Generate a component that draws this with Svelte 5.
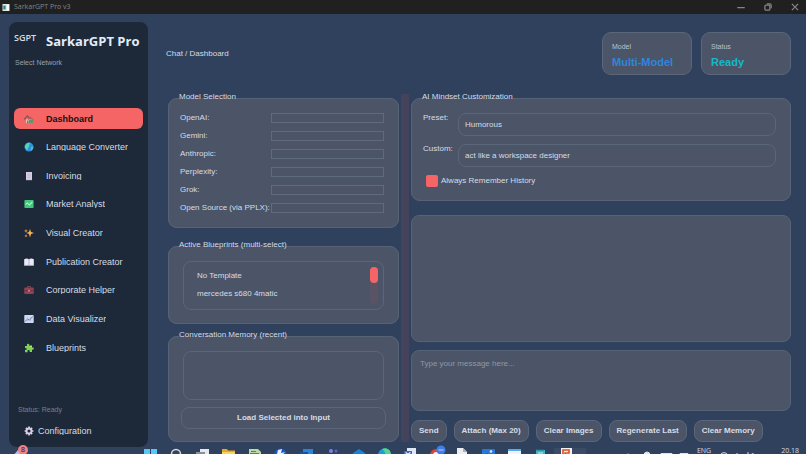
<script>
  const icons = {
    house: '<path d="M0 5.6 3.4 2 6.6 5.4" fill="none" stroke="#7d5a5c" stroke-width="1.3"/><path d="M2 5.4h4.4V9H2z" fill="#e8c6a8"/><path d="M5 6h4v3H5z" fill="#6d8f6a"/><path d="M4.4 5.6 6.8 3.4 9.6 6" fill="none" stroke="#b0603f" stroke-width="1"/><path d="M3 6.4h1.6V9H3z" fill="#5b7fa6"/>',
    globe: '<circle cx="5" cy="5" r="4.5" fill="#2f8fe0"/><path d="M.8 4C1.600 1.600 4 .3 6 .7 5.800 2.400 5 3 5 4.400 4.600 5.600 3.800 6 3.600 8 2 7.600.7 6 .8 4z" fill="#4fd6b4"/><path d="M7 5l2.300-.6c.2 1.800-.8 3.400-2.300 4.200-.6-1.200.2-2.400 0-3.600z" fill="#46c3c6"/>',
    receipt: '<path d="M2 1h6v8.400l-1-.6-1 .6-1-.6-1 .6-1-.6-1 .6z" fill="#d6d0e2"/><path d="M3.200 3h3.600M3.200 4.800h3.600M3.200 6.600h3.600" stroke="#b5aec8" stroke-width=".6"/>',
    market: '<rect x=".4" y="1" width="9.200" height="8" rx=".8" fill="#3fc97c"/><path d="M1.600 5.400 3.400 4l1.800 2L8.400 3" fill="none" stroke="#b8f5cf" stroke-width="1.100"/>',
    sparkles: '<path d="M6 1 7 4l3 1-3 1-1 3.400L5 6 2.400 5 5 4z" fill="#f9b84a"/><path d="M2 1l.5 1.300L4 3l-1.500.5L2 5l-.5-1.500L0 3l1.500-.7zM2 6l.4 1.200L3.600 8l-1.200.4L2 9.600l-.4-1.200L.4 8l1.200-.8z" fill="#f58b4c"/>',
    book: '<path d="M.2 2.200C2 1.400 4 1.400 5 2.400c1-1 3-1 4.800-.2v6.200H.2z" fill="#eceaf8"/><path d="M5 2.400v6" stroke="#8f93b5" stroke-width=".6"/><path d="M0 8.400h10" stroke="#8fb4e0" stroke-width=".7"/>',
    briefcase: '<path d="M3.400 2.800V1.600h3.200v1.200" fill="none" stroke="#8a4a58" stroke-width=".9"/><rect x=".2" y="2.600" width="9.600" height="6.400" rx="1" fill="#8e4253"/><path d="M.2 5.600h9.600" stroke="#5f2c3c" stroke-width=".6"/><rect x="4.200" y="4.800" width="1.600" height="1.800" fill="#d68f8f"/>',
    chart: '<rect x=".3" y="1" width="9.400" height="8" rx=".7" fill="#cfdcf2"/><path d="M.6 4h9M.6 6.400h9M3.500 1v8M6.500 1v8" stroke="#b7c5df" stroke-width=".4"/><path d="M1.200 7.400 3.600 5l1.800 1.200L8.800 2.400" fill="none" stroke="#6a7aac" stroke-width="1"/>',
    puzzle: '<path d="M1 3h2.200C2.400 1.400 3.400.6 4.400.8s1.400 1 .8 2.200L7.600 2.400 8 4.600c1.400-.6 2 .2 1.900 1-.1 1-1 1.300-1.900.8V9H5.600C6 7.600 5.400 7 4.600 7S3.200 7.800 3.600 9.200H1V6.800c1 .4 1.700 0 1.700-.8S2 4.800 1 5.200z" fill="#7bd657"/><path d="M5.200 3 7.600 2.400 8 4.600z" fill="#e0e86a"/>',
    gear: '<circle cx="5" cy="5" r="2.500" fill="none" stroke="#d9cfe6" stroke-width="1.900"/><path d="M5 .6v1.800M5 7.600v1.800M.6 5h1.800M7.600 5h1.800M1.900 1.900l1.200 1.200M6.900 6.900l1.200 1.200M8.100 1.900 6.900 3.100M3.100 6.900 1.900 8.100" stroke="#d9cfe6" stroke-width="1.700"/>',
  }

  const pages = [
    { name: 'Dashboard', icon: 'house' },
    { name: 'Language Converter', icon: 'globe' },
    { name: 'Invoicing', icon: 'receipt' },
    { name: 'Market Analyst', icon: 'market' },
    { name: 'Visual Creator', icon: 'sparkles' },
    { name: 'Publication Creator', icon: 'book' },
    { name: 'Corporate Helper', icon: 'briefcase' },
    { name: 'Data Visualizer', icon: 'chart' },
    { name: 'Blueprints', icon: 'puzzle' },
  ]

  const models = ['OpenAI', 'Gemini', 'Anthropic', 'Perplexity', 'Grok', 'Open Source (via PPLX)']
  const blueprints = ['No Template', 'mercedes s680 4matic']
  const actions = ['Send', 'Attach (Max 20)', 'Clear Images', 'Regenerate Last', 'Clear Memory']

  // only the top half of each taskbar icon shows above the screen edge
  const apps = [
    { name: 'Start', art: '<path d="M0 1h6v6H0zM7 1h6v6H7zM0 8h6v6H0zM7 8h6v6H7z" fill="#55c8f5"/>' },
    { name: 'Search', art: '<circle cx="6" cy="6" r="4.500" fill="#3a4458" stroke="#d5dae3" stroke-width="1.500"/>' },
    { name: 'Task view', art: '<path d="M4 1h9v9H4z" fill="#e8e8ea"/><path d="M0 4h9v8H0z" fill="#8b8f98"/>' },
    { name: 'Files', art: '<path d="M0 1h5l1 1.500h7V14H0z" fill="#e9a820"/><path d="M0 4h13v10H0z" fill="#fbd35a"/>' },
    { name: 'Sheets', art: '<path d="M1 1h9l3 3v10H1z" fill="#b9dba2"/><path d="M3 3h5v1H3zM2 5h9v9H2z" fill="#4d8a48"/>' },
    { name: 'Printer', art: '<circle cx="6.500" cy="7" r="6.500" fill="#1759c9"/><path d="M4 2l4-1-1 4 4-1-5 6V6H3z" fill="#e6f1ff"/>' },
    { name: 'Mail', art: '<path d="M3 1h10v13H3z" fill="#2b83dc"/><path d="M0 4h8v10H0z" fill="#1552a3"/>' },
    { name: 'Teams', art: '<circle cx="5" cy="3" r="2" fill="#7b83eb"/><circle cx="10" cy="3" r="1.500" fill="#5d64c4"/><path d="M1 6h11v8H1z" fill="#5059c9"/>' },
    { name: 'Outlook', art: '<path d="M1 5l6-4 6 4v9H1z" fill="#1583d8"/><path d="M0 6h7v8H0z" fill="#0b5cab"/>' },
    { name: 'Edge', art: '<circle cx="6.500" cy="7" r="6.500" fill="#1c9fd8"/><path d="M4 1c5-2 9 1 9 6H7c1-3-1-4-3-6z" fill="#56d68b"/>' },
    { name: 'Word', art: '<path d="M3 0h9v12H3z" fill="#dfe6f5"/><path d="M0 3h8v8H0z" fill="#4368b8"/><path d="M2 4l1 5 1-4 1 4 1-5" fill="none" stroke="#fff"/>' },
    { name: 'Chrome', art: '<circle cx="6" cy="7" r="6" fill="#de4336"/><circle cx="6" cy="7" r="3" fill="#f1f3f8"/><circle cx="11" cy="2" r="4.500" fill="#3f7fec"/><path d="M8.500 2h5" stroke="#bcd3fa"/>' },
    { name: 'Notes', art: '<path d="M1 0h6l4 4v10H1z" fill="#eceef0"/><path d="M7 0v4h4z" fill="#abb1ba"/>' },
    { name: 'Photos', art: '<rect y="1" width="13" height="13" rx="1" fill="#2678d9"/><circle cx="9" cy="3.500" r="1.300" fill="#d9ecff"/><path d="M0 10l5-5 6 7z" fill="#123f92"/>' },
    { name: 'Window', art: '<path d="M0 1h13v13H0z" fill="#f0f4f8"/><path d="M0 1h13v2H0z" fill="#57abe8"/>' },
    { name: 'Notepad', art: '<path d="M2 2h9v12H2z" fill="#3bb8c7"/><path d="M3 1v2M5 1v2M7 1v2M9 1v2" stroke="#187a91"/><path d="M4 5h5" stroke="#b9f0f4"/>' },
    { name: 'SarkarGPT', active: true, art: '<path d="M1 0h11v14H1z" fill="#f6f0ed"/><path d="M3 6V2h6v3H5v7" fill="none" stroke="#d8512c" stroke-width="1.600"/>' },
  ]

  let current = $state('Dashboard')
  let preset = $state('Humorous')
  let custom = $state('act like a workspace designer')
  let remember = $state(true)
  let message = $state('')
</script>

{#snippet icon(name)}
  <svg class="icon" viewBox="0 0 10 10" aria-hidden="true">{@html icons[name]}</svg>
{/snippet}

<div class="screen">
  <header class="titlebar">
    <svg class="app-icon" viewBox="0 0 9 9" aria-hidden="true">
      <path d="M0 0h9v9H0z" fill="#dce9e6" /><path d="M1 2h3v5H1z" fill="#2e8580" /><path d="M6 1h2v7H6z" fill="#fff" />
    </svg>
    <span>SarkarGPT Pro v3</span>
    <div class="window-buttons">
      <button aria-label="Minimize"><svg viewBox="0 0 8 8"><path d="M1 4.500h6" /></svg></button>
      <button aria-label="Restore"><svg viewBox="0 0 8 8"><rect x="1.500" y="2.500" width="4" height="4" rx="1" /><path d="M3 1.500h2.500a1 1 0 0 1 1 1V5" /></svg></button>
      <button aria-label="Close"><svg viewBox="0 0 8 8"><path d="M1.500 1.500l5 5M6.500 1.500l-5 5" /></svg></button>
    </div>
  </header>

  <div class="window">
    <aside class="sidebar">
      <div class="brand">
        <span class="logo">SGPT</span>
        <h1>SarkarGPT Pro</h1>
      </div>
      <div class="network">Select Network</div>
      <nav>
        {#each pages as page}
          <button class="nav-item" class:active={current === page.name} onclick={() => (current = page.name)}>
            {@render icon(page.icon)}
            <span class="nav-label">{page.name}</span>
          </button>
        {/each}
      </nav>
      <div class="side-status">Status: Ready</div>
      <button class="nav-item config">
        {@render icon('gear')}
        <span class="nav-label">Configuration</span>
      </button>
    </aside>

    <main>
      <div class="topbar">
        <span class="crumbs">Chat / {current}</span>
        <div class="stat">
          <span>Model</span>
          <strong class="blue">Multi-Model</strong>
        </div>
        <div class="stat">
          <span>Status</span>
          <strong class="teal">Ready</strong>
        </div>
      </div>

      <div class="split">
        <div class="left">
          <fieldset class="models">
            <legend>Model Selection</legend>
            <div class="model-grid">
              {#each models as model, i}
                <label for="model-{i}">{model}:</label>
                <select id="model-{i}"></select>
              {/each}
            </div>
          </fieldset>

          <fieldset>
            <legend>Active Blueprints (multi-select)</legend>
            <div class="list">
              <select multiple aria-label="Active Blueprints">
                {#each blueprints as b}
                  <option>{b}</option>
                {/each}
              </select>
              <div class="track"><div class="thumb"></div></div>
            </div>
          </fieldset>

          <fieldset class="memory">
            <legend>Conversation Memory (recent)</legend>
            <div class="memory-body">
              <div class="list"></div>
              <button class="btn load">Load Selected into Input</button>
            </div>
          </fieldset>
        </div>

        <div class="splitter"></div>

        <div class="right">
          <fieldset>
            <legend>AI Mindset Customization</legend>
            <div class="mindset">
              <label for="preset">Preset:</label>
              <select id="preset" class="field" bind:value={preset}>
                <option>Humorous</option>
              </select>
              <label for="custom">Custom:</label>
              <input id="custom" class="field" type="text" bind:value={custom} />
              <label class="check">
                <input type="checkbox" bind:checked={remember} />
                Always Remember History
              </label>
            </div>
          </fieldset>
          <div class="chat"></div>
          <textarea aria-label="Message" placeholder="Type your message here..." bind:value={message}></textarea>
          <div class="actions">
            {#each actions as action}
              <button class="btn">{action}</button>
            {/each}
          </div>
        </div>
      </div>
    </main>
  </div>

  <footer class="taskbar">
    <div class="widget">
      <svg viewBox="0 0 14 10" aria-hidden="true"><path d="M1 9 7 2l6 7z" fill="#a9c3ee" /></svg>
      <span class="badge">8</span>
    </div>
    <div class="apps">
      {#each apps as app}
        <div class="app" class:running={app.active} title={app.name}>
          <svg viewBox="0 0 13 14" aria-hidden="true">{@html app.art}</svg>
        </div>
      {/each}
    </div>
    <div class="tray">
      <svg class="tray-left" viewBox="0 0 64 7" aria-hidden="true">
        <path d="M1 7l2-1 2 1" /><circle cx="22" cy="7" r="3" fill="#e4e7ec" /><path d="M36 7V5.500h11V7M38 7h7M55 7V5.500h8V7" />
      </svg>
      <span>ENG</span>
      <svg class="tray-right" viewBox="0 0 40 7" aria-hidden="true">
        <path d="M1 7c2-3 6-3 8 0M18 5v2M29 4v3l5-1M34 5v2" />
      </svg>
      <span>20.18</span>
    </div>
  </footer>
</div>

<style>
  :global(body) { margin: 0; background: #30415d; }

  .screen {
    height: 100vh;
    display: flex;
    flex-direction: column;
    overflow: hidden;
    background: #30415d;
    color: #d6dce6;
    font-family: "Liberation Sans", Arial, sans-serif;
    font-size: 8px;
    line-height: 10px;
  }
  .screen * { box-sizing: border-box; }

  button, select, input, textarea {
    margin: 0;
    padding: 0;
    border: none;
    border-radius: 0;
    outline: none;
    background: transparent;
    color: inherit;
    font: inherit;
    appearance: none;
  }

  .titlebar {
    height: 14px;
    flex: none;
    display: flex;
    align-items: center;
    gap: 4px;
    padding: 0 6px 0 2px;
    background: #202020;
    color: #858585;
    font-family: "Open Sans", sans-serif;
    font-size: 7px;
  }
  .app-icon { width: 8px; height: 7px; }
  .window-buttons { display: flex; gap: 17px; margin-left: auto; }
  .window-buttons button { width: 10px; height: 10px; }
  .window-buttons svg { display: block; width: 10px; height: 10px; fill: none; stroke: #858585; stroke-width: 1; }

  .window { flex: 1; min-height: 0; display: flex; padding: 7px 15px 0 8px; }

  .sidebar {
    width: 141px;
    flex: none;
    display: flex;
    flex-direction: column;
    padding: 10px 5px 6px;
    background: #1d2939;
    border: 1px solid #33425a;
    border-radius: 9px;
  }
  .brand { display: flex; align-items: flex-start; gap: 10px; height: 26px; font-family: "Open Sans", sans-serif; }
  .logo { line-height: 12px; font-size: 9px; font-weight: 600; }
  h1 { margin: 0; font-size: 13px; line-height: 18px; font-weight: 700; white-space: nowrap; color: #e2ecf8; }
  .network { padding-left: 1px; font-size: 7px; color: #98a0ac; }

  nav {
    flex: 1;
    display: flex;
    flex-direction: column;
    justify-content: space-between;
    padding: 40px 0 47px;
  }
  .nav-item {
    display: flex;
    align-items: center;
    gap: 12px;
    height: 21px;
    padding: 0 10px;
    border-radius: 6px;
    font-size: 9px;
    text-align: left;
  }
  .nav-label { line-height: 8px; overflow: hidden; }
  .nav-item.active { background: #f56565; color: #14110f; font-weight: 700; }
  .nav-item.config { gap: 4px; }
  .icon { width: 10px; height: 10px; flex: none; }
  .side-status { padding: 0 4px 5px; font-size: 7px; color: #77808e; }

  main {
    flex: 1;
    min-width: 0;
    display: flex;
    flex-direction: column;
    gap: 17px;
    padding: 11px 0 6px 17px;
  }
  .topbar { display: flex; align-items: center; gap: 9px; }
  .crumbs { flex: 1; }
  .stat {
    width: 90px;
    height: 43px;
    display: flex;
    flex-direction: column;
    justify-content: center;
    gap: 3px;
    padding: 4px 9px 0;
    background: #4b5567;
    border: 1px solid #5a6679;
    border-radius: 9px;
    font-size: 7px;
    color: #b9c0ca;
  }
  .stat strong { font-size: 11px; line-height: 14px; }
  .blue { color: #2f86dc; }
  .teal { color: #17b8c6; }

  .split {
    flex: 1;
    min-height: 0;
    display: grid;
    grid-template-columns: minmax(0, 231fr) 8px minmax(0, 380fr);
    gap: 2px;
    padding-left: 2px;
  }
  .left, .right { display: flex; flex-direction: column; min-height: 0; }
  .left { gap: 6px; }
  .splitter { margin-top: 2px; background: #45435b; }

  fieldset {
    min-width: 0;
    margin: 0;
    padding: 8px 14px 13px;
    background: #4b5567;
    border: 1px solid #566275;
    border-radius: 9px;
  }
  legend { margin-left: -4px; padding: 0 0 3px; }

  .models { margin-bottom: 6px; padding-left: 11px; padding-bottom: 14px; }
  .models legend { margin-left: -1px; }
  .model-grid {
    display: grid;
    grid-template-columns: 91px minmax(0, 1fr);
    grid-auto-rows: 10px;
    row-gap: 8px;
  }
  .model-grid label { white-space: nowrap; }
  .model-grid select { border: 1px solid #5f6b7e; }

  .list {
    display: flex;
    height: 49px;
    padding: 5px;
    border: 1px solid #5a6679;
    border-radius: 8px;
  }
  .list select { flex: 1; min-width: 0; overflow: hidden; }
  .list option { min-height: 18px; padding: 4px 8px; line-height: 10px; }
  .track { width: 8px; border-radius: 4px; background: #5b5264; }
  .thumb { height: 16px; border-radius: 4px; background: #f56565; }

  .memory { flex: 1; padding-bottom: 12px; }
  .memory-body { height: 100%; display: flex; flex-direction: column; gap: 7px; }
  .memory-body .list { flex: 1; }

  .btn {
    height: 22px;
    padding: 0 7px;
    background: #4b5567;
    border: 1px solid #5a6679;
    border-radius: 8px;
    font-weight: 700;
    white-space: nowrap;
  }
  .load { margin: 0 -2px; }

  .mindset {
    display: grid;
    grid-template-columns: 35px minmax(0, 1fr);
    row-gap: 8px;
    margin-left: -3px;
  }
  .mindset > label { white-space: nowrap; }
  .field { height: 23px; padding: 0 6px; border: 1px solid #5a6679; border-radius: 8px; }
  .mindset .check { grid-column: 1 / -1; display: flex; align-items: center; gap: 3px; padding-left: 3px; }
  .check input { width: 12px; height: 12px; border-radius: 2px; background: #5f6b7d; }
  .check input:checked { background: #f56565; }

  .chat, textarea { background: #4b5567; border: 1px solid #566275; border-radius: 8px; }
  .chat { flex: 1; min-height: 0; margin: 14px 0 8px; }
  textarea { height: 61px; padding: 8px; resize: none; }
  textarea::placeholder { color: #8f98a6; }
  .actions { display: flex; gap: 7px; margin-top: 9px; }

  .taskbar { height: 6px; flex: none; display: flex; }
  .widget { position: relative; width: 144px; padding-left: 11px; }
  .widget svg { display: block; width: 14px; height: 10px; }
  .badge {
    position: absolute;
    left: 18px;
    top: -3px;
    width: 10px;
    height: 10px;
    border-radius: 50%;
    background: #f28089;
    color: #2a2226;
    font-size: 7px;
    text-align: center;
  }
  .apps { display: flex; }
  .app { width: 26px; height: 14px; }
  .app svg { display: block; width: 13px; height: 14px; overflow: visible; }
  .app.running { background: #3b4a66; box-shadow: -6px 0 #3b4a66; }
  .tray {
    display: flex;
    gap: 8px;
    margin-left: auto;
    padding-right: 7px;
    font-family: "Open Sans", sans-serif;
    font-size: 7px;
    line-height: 5px;
  }
  .tray svg { height: 7px; fill: none; stroke: #dfe3ea; stroke-width: 1; }
  .tray-left { width: 64px; }
  .tray-right { width: 40px; margin-right: 14px; }
</style>
